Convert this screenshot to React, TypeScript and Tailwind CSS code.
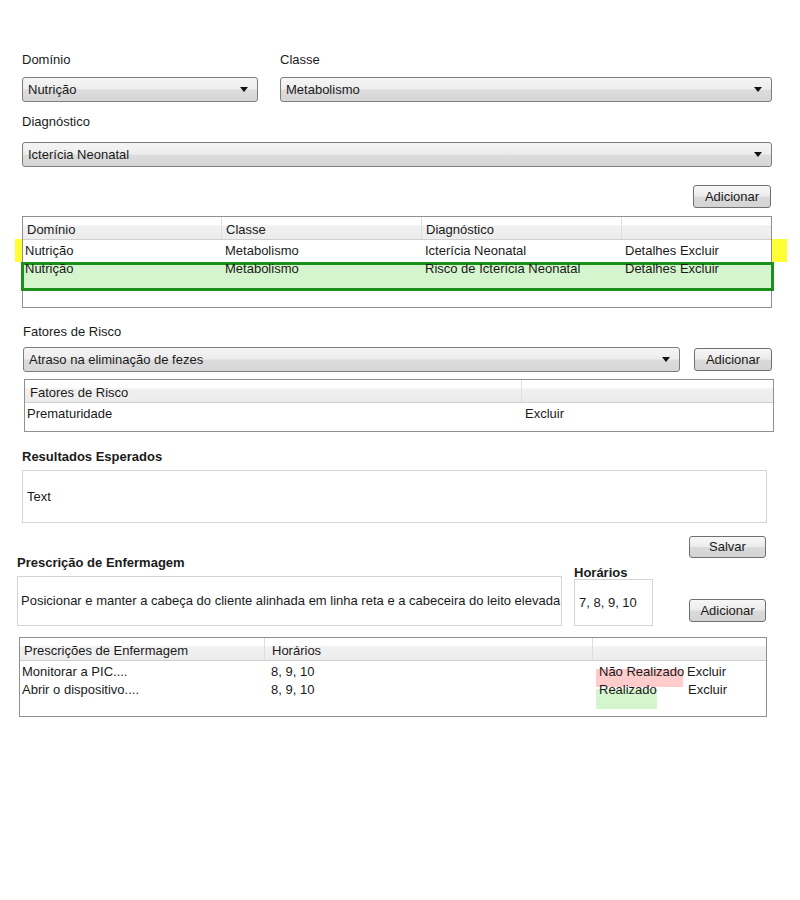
import React from 'react';

const Arrow = () => (
    <svg width="8" height="5" viewBox="0 0 8 5" className="shrink-0">
        <polygon points="0,0 8,0 4,5" fill="#111" />
    </svg>
);

const Select = ({ value, className }: { value: string; className: string }) => (
    <div
        className={`flex items-center justify-between pl-[5px] pr-[9px] border border-[#7d7d7d] rounded-[3px] bg-[linear-gradient(to_bottom,#f5f5f5_0%,#ededed_48%,#dcdcdc_52%,#d6d6d6_100%)] ${className}`}
    >
        <span>{value}</span>
        <Arrow />
    </div>
);

const Button = ({ label, className }: { label: string; className: string }) => (
    <div
        className={`flex items-center justify-center border border-[#707070] rounded-[3px] bg-[linear-gradient(to_bottom,#f7f7f7_0%,#ececec_48%,#dadada_52%,#d4d4d4_100%)] ${className}`}
    >
        {label}
    </div>
);

const headerBg = 'bg-[linear-gradient(to_bottom,#ffffff_0%,#ffffff_35%,#f1f1f1_40%,#ececec_100%)]';
const headCell = 'pt-[5px] border-r border-[#dedede]';

const App = () => {
    return (
        <div className="w-[800px] h-[900px] bg-white text-[13px] leading-4 text-[#1a1a1a] font-['Liberation_Sans',Arial,sans-serif]">
            <div className="pt-[52px] pl-[22px]">
                {/* Domínio / Classe */}
                <div className="flex gap-[22px]">
                    <div className="w-[236px]">
                        <div>Domínio</div>
                        <Select value="Nutrição" className="mt-[9px] h-[25px]" />
                    </div>
                    <div className="w-[492px]">
                        <div>Classe</div>
                        <Select value="Metabolismo" className="mt-[9px] h-[25px]" />
                    </div>
                </div>

                <div className="mt-[12px]">Diagnóstico</div>
                <Select value="Icterícia Neonatal" className="mt-[12px] h-[25px] w-[750px]" />

                <div className="w-[750px] flex justify-end mt-[18px]">
                    <Button label="Adicionar" className="w-[78px] h-[23px] mr-[1px]" />
                </div>

                {/* Diagnósticos table */}
                <div className="relative mt-[8px] w-[750px]">
                    <div className="absolute left-[-7px] top-[23px] w-[772px] h-[23px] bg-[#ffff33]" />
                    <div className="relative h-[92px] border border-[#909090] bg-white">
                        <div className={`flex h-[23px] border-b border-[#cfcfcf] ${headerBg}`}>
                            <div className={`w-[199px] pl-[4px] ${headCell}`}>Domínio</div>
                            <div className={`w-[200px] pl-[4px] ${headCell}`}>Classe</div>
                            <div className={`w-[200px] pl-[4px] ${headCell}`}>Diagnóstico</div>
                            <div className="flex-1" />
                        </div>
                        <div className="relative pt-[2px]">
                            <div className="absolute left-[-2px] top-[22px] w-[753px] h-[29px] border-[3px] border-[#1b901b] bg-[#d4f5cd]" />
                            {[
                                ['Nutrição', 'Metabolismo', 'Icterícia Neonatal'],
                                ['Nutrição', 'Metabolismo', 'Risco de Icterícia Neonatal'],
                            ].map((r, i) => (
                                <div key={i} className="relative flex h-[18px] items-center">
                                    <div className="w-[200px] pl-[2px]">{r[0]}</div>
                                    <div className="w-[200px] pl-[2px]">{r[1]}</div>
                                    <div className="w-[200px] pl-[2px]">{r[2]}</div>
                                    <div className="flex-1 pl-[2px]">Detalhes Excluir</div>
                                </div>
                            ))}
                        </div>
                    </div>
                </div>

                {/* Fatores de Risco */}
                <div className="mt-[16px] ml-[1px]">Fatores de Risco</div>
                <div className="flex items-center mt-[7px] ml-[1px]">
                    <Select value="Atraso na eliminação de fezes" className="w-[657px] h-[25px]" />
                    <Button label="Adicionar" className="ml-[14px] w-[78px] h-[23px]" />
                </div>
                <div className="mt-[7px] ml-[2px] w-[750px] h-[53px] border border-[#909090] bg-white">
                    <div className={`flex h-[23px] border-b border-[#cfcfcf] ${headerBg}`}>
                        <div className={`w-[497px] pl-[5px] ${headCell}`}>Fatores de Risco</div>
                        <div className="flex-1" />
                    </div>
                    <div className="flex h-[20px] items-center pt-[1px]">
                        <div className="w-[498px] pl-[2px]">Prematuridade</div>
                        <div className="flex-1 pl-[2px]">Excluir</div>
                    </div>
                </div>

                {/* Resultados Esperados */}
                <div className="mt-[17px] font-bold">Resultados Esperados</div>
                <div className="mt-[5px] w-[745px] h-[53px] border border-[#d4d4d4] flex items-center pl-[4px]">Text</div>
            </div>

            {/* Prescrição */}
            <div className="flex mt-[13px] pl-[17px]">
                <div className="w-[545px] pt-[19px]">
                    <div className="font-bold">Prescrição de Enfermagem</div>
                    <div className="mt-[5px] h-[50px] border border-[#d4d4d4] flex items-center pl-[3px] whitespace-nowrap overflow-hidden">
                        Posicionar e manter a cabeça do cliente alinhada em linha reta e a cabeceira do leito elevada
                    </div>
                </div>
                <div className="ml-[12px] w-[79px] pt-[30px]">
                    <div className="font-bold leading-[13px]">Horários</div>
                    <div className="h-[47px] border border-[#d4d4d4] flex items-center pl-[4px]">7, 8, 9, 10</div>
                </div>
                <div className="ml-[36px] w-[77px]">
                    <Button label="Salvar" className="h-[22px]" />
                    <Button label="Adicionar" className="mt-[41px] h-[23px]" />
                </div>
            </div>

            <div className="mt-[11px] ml-[19px] w-[748px] h-[80px] border border-[#909090] bg-white">
                <div className={`flex h-[23px] border-b border-[#cfcfcf] ${headerBg}`}>
                    <div className={`w-[245px] pl-[4px] ${headCell}`}>Prescrições de Enfermagem</div>
                    <div className={`w-[328px] pl-[7px] ${headCell}`}>Horários</div>
                    <div className="flex-1" />
                </div>
                {[
                    { p: 'Monitorar a PIC....', h: '8, 9, 10', s: 'Não Realizado', bg: 'bg-[#ffcccc]', w: 'w-[87px] h-[18px] top-[6px]', ex: 'ml-[91px]' },
                    { p: 'Abrir o dispositivo....', h: '8, 9, 10', s: 'Realizado', bg: 'bg-[#d4f5cd]', w: 'w-[61px] h-[20px] top-[8px]', ex: 'ml-[92px]' },
                ].map((r, i) => (
                    <div key={i} className={`flex h-[18px] items-center ${i === 0 ? 'mt-[2px]' : ''}`}>
                        <div className="w-[251px] pl-[2px]">{r.p}</div>
                        <div className="w-[325px]">{r.h}</div>
                        <div className="relative flex-1 h-full flex items-center">
                            <div className={`absolute left-0 ${r.w} ${r.bg}`} />
                            <span className="relative pl-[3px] w-[91px]">{r.s}</span>
                            <span className={`absolute left-0 ${r.ex}`}>Excluir</span>
                        </div>
                    </div>
                ))}
            </div>
        </div>
    );
};

export default App;
